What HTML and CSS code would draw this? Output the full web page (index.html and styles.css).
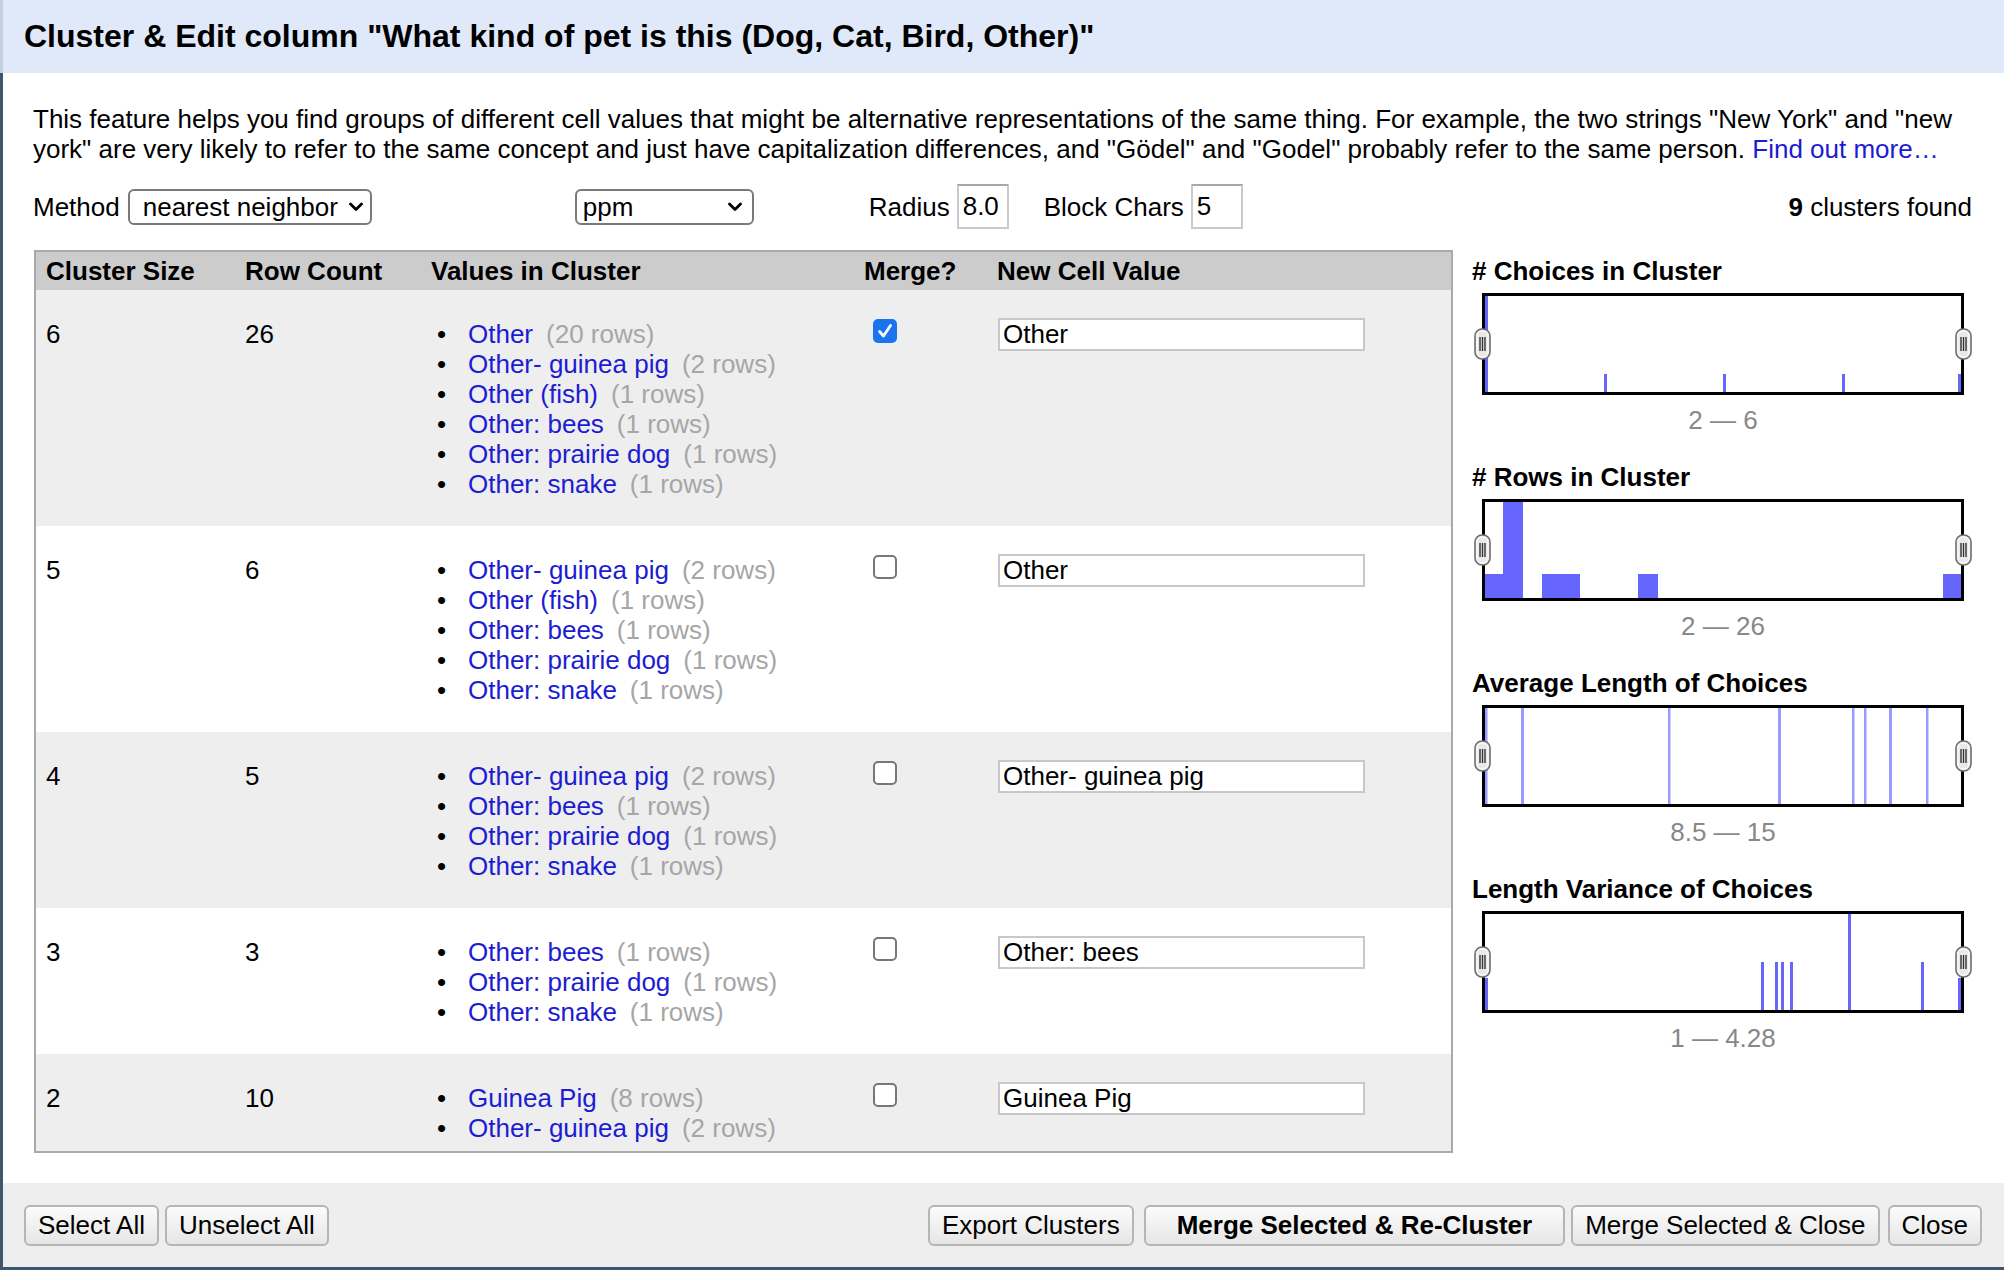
FILE: index.html
```html
<!DOCTYPE html>
<html>
<head>
<meta charset="utf-8">
<link rel="stylesheet" href="styles.css">
</head>
<body>
<div class="dialog">
  <div class="dlg-header">
    <h1 class="dlg-title">Cluster &amp; Edit column "What kind of pet is this (Dog, Cat, Bird, Other)"</h1>
  </div>
  <div class="dlg-body">
    <p class="intro">This feature helps you find groups of different cell values that might be alternative representations of the same thing. For example, the two strings "New York" and "new york" are very likely to refer to the same concept and just have capitalization differences, and "Gödel" and "Godel" probably refer to the same person. <a class="link" href="#">Find out more…</a></p>

    <div class="controls">
      <span class="lbl">Method</span>
      <div class="select select-method"><span>nearest neighbor</span><svg class="chev" width="14" height="10" viewBox="0 0 14 10"><polyline points="1.5,2 7,7.5 12.5,2" fill="none" stroke="#000" stroke-width="2.8" stroke-linecap="round" stroke-linejoin="round"/></svg></div>
      <div class="select select-fn"><span>ppm</span><svg class="chev" width="14" height="10" viewBox="0 0 14 10"><polyline points="1.5,2 7,7.5 12.5,2" fill="none" stroke="#000" stroke-width="2.8" stroke-linecap="round" stroke-linejoin="round"/></svg></div>
      <span class="lbl lbl-radius">Radius</span>
      <input class="field" type="text" value="8.0">
      <span class="lbl lbl-block">Block Chars</span>
      <input class="field" type="text" value="5">
      <span class="found"><b>9</b> clusters found</span>
    </div>

    <div class="main">
      <div class="table-wrap">
        <div class="trow thead">
          <div class="c">Cluster Size</div>
          <div class="c">Row Count</div>
          <div class="c">Values in Cluster</div>
          <div class="c">Merge?</div>
          <div class="c">New Cell Value</div>
        </div>

        <div class="trow odd">
          <div class="c">6</div>
          <div class="c">26</div>
          <div class="c">
            <ul class="values">
              <li><a class="val" href="#">Other</a><span class="cnt">(20 rows)</span></li>
              <li><a class="val" href="#">Other- guinea pig</a><span class="cnt">(2 rows)</span></li>
              <li><a class="val" href="#">Other (fish)</a><span class="cnt">(1 rows)</span></li>
              <li><a class="val" href="#">Other: bees</a><span class="cnt">(1 rows)</span></li>
              <li><a class="val" href="#">Other: prairie dog</a><span class="cnt">(1 rows)</span></li>
              <li><a class="val" href="#">Other: snake</a><span class="cnt">(1 rows)</span></li>
            </ul>
          </div>
          <div class="c"><span class="cb on"><svg width="20" height="20" viewBox="0 0 20 20"><polyline points="4.5,10.5 8.5,15 15.5,4.5" fill="none" stroke="#fff" stroke-width="2.8" stroke-linecap="round" stroke-linejoin="round"/></svg></span></div>
          <div class="c"><input class="newval" type="text" value="Other"></div>
        </div>

        <div class="trow">
          <div class="c">5</div>
          <div class="c">6</div>
          <div class="c">
            <ul class="values">
              <li><a class="val" href="#">Other- guinea pig</a><span class="cnt">(2 rows)</span></li>
              <li><a class="val" href="#">Other (fish)</a><span class="cnt">(1 rows)</span></li>
              <li><a class="val" href="#">Other: bees</a><span class="cnt">(1 rows)</span></li>
              <li><a class="val" href="#">Other: prairie dog</a><span class="cnt">(1 rows)</span></li>
              <li><a class="val" href="#">Other: snake</a><span class="cnt">(1 rows)</span></li>
            </ul>
          </div>
          <div class="c"><span class="cb"></span></div>
          <div class="c"><input class="newval" type="text" value="Other"></div>
        </div>

        <div class="trow odd">
          <div class="c">4</div>
          <div class="c">5</div>
          <div class="c">
            <ul class="values">
              <li><a class="val" href="#">Other- guinea pig</a><span class="cnt">(2 rows)</span></li>
              <li><a class="val" href="#">Other: bees</a><span class="cnt">(1 rows)</span></li>
              <li><a class="val" href="#">Other: prairie dog</a><span class="cnt">(1 rows)</span></li>
              <li><a class="val" href="#">Other: snake</a><span class="cnt">(1 rows)</span></li>
            </ul>
          </div>
          <div class="c"><span class="cb"></span></div>
          <div class="c"><input class="newval" type="text" value="Other- guinea pig"></div>
        </div>

        <div class="trow">
          <div class="c">3</div>
          <div class="c">3</div>
          <div class="c">
            <ul class="values">
              <li><a class="val" href="#">Other: bees</a><span class="cnt">(1 rows)</span></li>
              <li><a class="val" href="#">Other: prairie dog</a><span class="cnt">(1 rows)</span></li>
              <li><a class="val" href="#">Other: snake</a><span class="cnt">(1 rows)</span></li>
            </ul>
          </div>
          <div class="c"><span class="cb"></span></div>
          <div class="c"><input class="newval" type="text" value="Other: bees"></div>
        </div>

        <div class="trow odd">
          <div class="c">2</div>
          <div class="c">10</div>
          <div class="c">
            <ul class="values">
              <li><a class="val" href="#">Guinea Pig</a><span class="cnt">(8 rows)</span></li>
              <li><a class="val" href="#">Other- guinea pig</a><span class="cnt">(2 rows)</span></li>
            </ul>
          </div>
          <div class="c"><span class="cb"></span></div>
          <div class="c"><input class="newval" type="text" value="Guinea Pig"></div>
        </div>
      </div>

      <div class="facets">
        <div class="facet">
          <h3 class="facet-title"># Choices in Cluster</h3>
          <div class="hist">
            <svg class="bars" viewBox="0 0 476 96" width="476" height="96">
              <g fill="#6666ff">
                <rect x="0" y="0" width="3" height="96"/>
                <rect x="119" y="78" width="3" height="18"/>
                <rect x="238" y="78" width="3" height="18"/>
                <rect x="357" y="78" width="3" height="18"/>
                <rect x="473" y="78" width="3" height="18"/>
              </g>
            </svg>
            <svg class="handle l" width="17" height="32" viewBox="0 0 17 32"><rect x="1" y="1" width="15" height="30" rx="7" fill="#e9e9e9" stroke="#6e6e6e" stroke-width="1.6"/><rect x="3" y="3" width="11" height="26" rx="5" fill="none" stroke="#fff" stroke-width="1"/><g stroke="#333" stroke-width="1.4"><line x1="6" y1="9" x2="6" y2="23"/><line x1="8.5" y1="9" x2="8.5" y2="23"/><line x1="11" y1="9" x2="11" y2="23"/></g></svg>
            <svg class="handle r" width="17" height="32" viewBox="0 0 17 32"><rect x="1" y="1" width="15" height="30" rx="7" fill="#e9e9e9" stroke="#6e6e6e" stroke-width="1.6"/><rect x="3" y="3" width="11" height="26" rx="5" fill="none" stroke="#fff" stroke-width="1"/><g stroke="#333" stroke-width="1.4"><line x1="6" y1="9" x2="6" y2="23"/><line x1="8.5" y1="9" x2="8.5" y2="23"/><line x1="11" y1="9" x2="11" y2="23"/></g></svg>
          </div>
          <div class="range">2 — 6</div>
        </div>

        <div class="facet">
          <h3 class="facet-title"># Rows in Cluster</h3>
          <div class="hist">
            <svg class="bars" viewBox="0 0 476 96" width="476" height="96">
              <g fill="#6666ff">
                <rect x="0" y="72" width="18" height="24"/>
                <rect x="18" y="0" width="20" height="96"/>
                <rect x="57" y="72" width="38" height="24"/>
                <rect x="153" y="72" width="20" height="24"/>
                <rect x="458" y="72" width="18" height="24"/>
              </g>
            </svg>
            <svg class="handle l" width="17" height="32" viewBox="0 0 17 32"><rect x="1" y="1" width="15" height="30" rx="7" fill="#e9e9e9" stroke="#6e6e6e" stroke-width="1.6"/><rect x="3" y="3" width="11" height="26" rx="5" fill="none" stroke="#fff" stroke-width="1"/><g stroke="#333" stroke-width="1.4"><line x1="6" y1="9" x2="6" y2="23"/><line x1="8.5" y1="9" x2="8.5" y2="23"/><line x1="11" y1="9" x2="11" y2="23"/></g></svg>
            <svg class="handle r" width="17" height="32" viewBox="0 0 17 32"><rect x="1" y="1" width="15" height="30" rx="7" fill="#e9e9e9" stroke="#6e6e6e" stroke-width="1.6"/><rect x="3" y="3" width="11" height="26" rx="5" fill="none" stroke="#fff" stroke-width="1"/><g stroke="#333" stroke-width="1.4"><line x1="6" y1="9" x2="6" y2="23"/><line x1="8.5" y1="9" x2="8.5" y2="23"/><line x1="11" y1="9" x2="11" y2="23"/></g></svg>
          </div>
          <div class="range">2 — 26</div>
        </div>

        <div class="facet">
          <h3 class="facet-title">Average Length of Choices</h3>
          <div class="hist">
            <svg class="bars" viewBox="0 0 476 96" width="476" height="96">
              <g fill="#9a9aff">
                <rect x="0" y="0" width="2.5" height="96"/>
                <rect x="36" y="0" width="3" height="96"/>
                <rect x="183" y="0" width="2.5" height="96"/>
                <rect x="293" y="0" width="3" height="96"/>
                <rect x="367" y="0" width="2.5" height="96"/>
                <rect x="379" y="0" width="2.5" height="96"/>
                <rect x="404" y="0" width="3" height="96"/>
                <rect x="441" y="0" width="2.5" height="96"/>
              </g>
            </svg>
            <svg class="handle l" width="17" height="32" viewBox="0 0 17 32"><rect x="1" y="1" width="15" height="30" rx="7" fill="#e9e9e9" stroke="#6e6e6e" stroke-width="1.6"/><rect x="3" y="3" width="11" height="26" rx="5" fill="none" stroke="#fff" stroke-width="1"/><g stroke="#333" stroke-width="1.4"><line x1="6" y1="9" x2="6" y2="23"/><line x1="8.5" y1="9" x2="8.5" y2="23"/><line x1="11" y1="9" x2="11" y2="23"/></g></svg>
            <svg class="handle r" width="17" height="32" viewBox="0 0 17 32"><rect x="1" y="1" width="15" height="30" rx="7" fill="#e9e9e9" stroke="#6e6e6e" stroke-width="1.6"/><rect x="3" y="3" width="11" height="26" rx="5" fill="none" stroke="#fff" stroke-width="1"/><g stroke="#333" stroke-width="1.4"><line x1="6" y1="9" x2="6" y2="23"/><line x1="8.5" y1="9" x2="8.5" y2="23"/><line x1="11" y1="9" x2="11" y2="23"/></g></svg>
          </div>
          <div class="range">8.5 — 15</div>
        </div>

        <div class="facet">
          <h3 class="facet-title">Length Variance of Choices</h3>
          <div class="hist">
            <svg class="bars" viewBox="0 0 476 96" width="476" height="96">
              <g fill="#6666ff">
                <rect x="0" y="64" width="3" height="32"/>
                <rect x="276" y="48" width="3" height="48"/>
                <rect x="290" y="48" width="3" height="48"/>
                <rect x="296" y="48" width="3" height="48"/>
                <rect x="305" y="48" width="3" height="48"/>
                <rect x="363" y="0" width="3" height="96"/>
                <rect x="436" y="48" width="3" height="48"/>
                <rect x="473" y="64" width="3" height="32"/>
              </g>
            </svg>
            <svg class="handle l" width="17" height="32" viewBox="0 0 17 32"><rect x="1" y="1" width="15" height="30" rx="7" fill="#e9e9e9" stroke="#6e6e6e" stroke-width="1.6"/><rect x="3" y="3" width="11" height="26" rx="5" fill="none" stroke="#fff" stroke-width="1"/><g stroke="#333" stroke-width="1.4"><line x1="6" y1="9" x2="6" y2="23"/><line x1="8.5" y1="9" x2="8.5" y2="23"/><line x1="11" y1="9" x2="11" y2="23"/></g></svg>
            <svg class="handle r" width="17" height="32" viewBox="0 0 17 32"><rect x="1" y="1" width="15" height="30" rx="7" fill="#e9e9e9" stroke="#6e6e6e" stroke-width="1.6"/><rect x="3" y="3" width="11" height="26" rx="5" fill="none" stroke="#fff" stroke-width="1"/><g stroke="#333" stroke-width="1.4"><line x1="6" y1="9" x2="6" y2="23"/><line x1="8.5" y1="9" x2="8.5" y2="23"/><line x1="11" y1="9" x2="11" y2="23"/></g></svg>
          </div>
          <div class="range">1 — 4.28</div>
        </div>
      </div>
    </div>
  </div>

  <div class="dlg-footer">
    <button class="btn">Select All</button>
    <button class="btn btn-unselect">Unselect All</button>
    <button class="btn btn-export">Export Clusters</button>
    <button class="btn btn-primary">Merge Selected &amp; Re-Cluster</button>
    <button class="btn btn-mclose">Merge Selected &amp; Close</button>
    <button class="btn btn-close">Close</button>
  </div>
</div>
</body>
</html>
```

FILE: styles.css
```css
html, body {
  margin: 0;
  padding: 0;
}

body {
  font-family: "Liberation Sans", Arial, Helvetica, sans-serif;
  font-size: 26px;
  line-height: 30px;
  color: #000;
  background: #fff;
}

.dialog {
  width: 2004px;
  height: 1270px;
  display: flex;
  flex-direction: column;
  overflow: hidden;
}

/* header */
.dlg-header {
  flex: none;
  height: 73px;
  box-sizing: border-box;
  background: #dfe9f9;
  border-left: 3px solid #c4d0e0;
  padding: 0 0 2px 21px;
  display: flex;
  align-items: center;
}

.dlg-title {
  margin: 0;
  font-size: 32px;
  line-height: 38px;
  font-weight: bold;
}

/* body */
.dlg-body {
  flex: 1;
  border-left: 3px solid #3e5670;
  padding: 31px 30px 0 30px;
}

.intro {
  margin: 0;
}

.link {
  color: #1c1cd2;
  text-decoration: none;
}

.controls {
  display: flex;
  align-items: center;
  height: 45px;
  margin-top: 20px;
}

.select {
  display: flex;
  align-items: center;
  justify-content: space-between;
  height: 36px;
  box-sizing: border-box;
  border: 2px solid #7a7a7a;
  border-radius: 6px;
  background: #fff;
}

.select-method {
  width: 244px;
  margin-left: 8px;
  padding: 0 7px 0 13px;
}

.select-fn {
  width: 179px;
  margin-left: 203px;
  padding: 0 10px 0 6px;
}

.chev {
  display: block;
  flex: none;
}

.lbl-radius {
  margin-left: 115px;
}

.lbl-block {
  margin-left: 35px;
}

.field {
  width: 52px;
  height: 45px;
  box-sizing: border-box;
  margin: 0 0 0 7px;
  padding: 0 4px;
  border: 2px solid #cacaca;
  border-top-color: #a8a8a8;
  font-family: inherit;
  font-size: 26px;
  color: #000;
  background: #fff;
  outline: none;
}

.found {
  margin-left: auto;
  padding-right: 2px;
}

/* main area */
.main {
  display: flex;
  margin-top: 21px;
}

.table-wrap {
  width: 1419px;
  height: 903px;
  box-sizing: border-box;
  margin-left: 1px;
  border: 2px solid #aaa;
  overflow: hidden;
  flex: none;
}

.trow {
  display: grid;
  grid-template-columns: 199px 186px 433px 133px 1fr;
  padding: 29px 0 27px;
}

.trow.odd {
  background: #eee;
}

.thead {
  background: #ccc;
  height: 38px;
  box-sizing: border-box;
  padding: 4px 0 0;
  font-weight: bold;
}

.c {
  padding: 0 10px;
}

.values {
  list-style: none;
  margin: 0;
  padding: 0 0 0 6px;
}

.values li::before {
  content: "•";
  display: inline-block;
  width: 31px;
}

.val {
  color: #1c1cd2;
  text-decoration: none;
}

.cnt {
  color: #a6a6a6;
  margin-left: 13px;
}

.cb {
  display: flex;
  align-items: center;
  justify-content: center;
  width: 24px;
  height: 24px;
  box-sizing: border-box;
  margin-left: 9px;
  border: 2px solid #777;
  border-radius: 5px;
  background: #fff;
}

.cb.on {
  background: #1b74ee;
  border-color: #1b74ee;
}

.newval {
  display: block;
  width: 367px;
  height: 33px;
  box-sizing: border-box;
  margin: -1px 0 0 1px;
  padding: 0 3px;
  border: 2px solid #c8c8c8;
  font-family: inherit;
  font-size: 26px;
  color: #000;
  background: #fff;
  outline: none;
}

/* facets */
.facets {
  margin-left: 19px;
  padding-top: 6px;
}

.facet + .facet {
  margin-top: 27px;
}

.facet-title {
  margin: 0;
  font-size: 26px;
  line-height: 30px;
  font-weight: bold;
}

.hist {
  position: relative;
  width: 482px;
  height: 102px;
  box-sizing: border-box;
  margin: 7px 0 0 10px;
  border: 3px solid #000;
  background: #fff;
}

.bars {
  display: block;
}

.handle {
  position: absolute;
  top: 32px;
}

.handle.l {
  left: -11px;
}

.handle.r {
  right: -11px;
}

.range {
  width: 482px;
  margin: 10px 0 0 10px;
  text-align: center;
  color: #888;
}

/* footer */
.dlg-footer {
  flex: none;
  height: 87px;
  box-sizing: border-box;
  background: #eee;
  border-left: 3px solid #3e5670;
  border-bottom: 3px solid #3e5670;
  display: flex;
  align-items: center;
  padding: 0 22px 0 21px;
}

.btn {
  height: 41px;
  box-sizing: border-box;
  padding: 0 12px;
  border: 2px solid #b5b5b5;
  border-radius: 6px;
  background: linear-gradient(#fbfbfb, #e6e6e6);
  font-family: inherit;
  font-size: 26px;
  line-height: 30px;
  color: #000;
}

.btn-unselect {
  margin-left: 6px;
}

.btn-export {
  margin-left: auto;
}

.btn-primary {
  margin-left: 10px;
  padding: 0 31px;
  font-weight: bold;
}

.btn-mclose {
  margin-left: 6px;
}

.btn-close {
  margin-left: 8px;
}
```
